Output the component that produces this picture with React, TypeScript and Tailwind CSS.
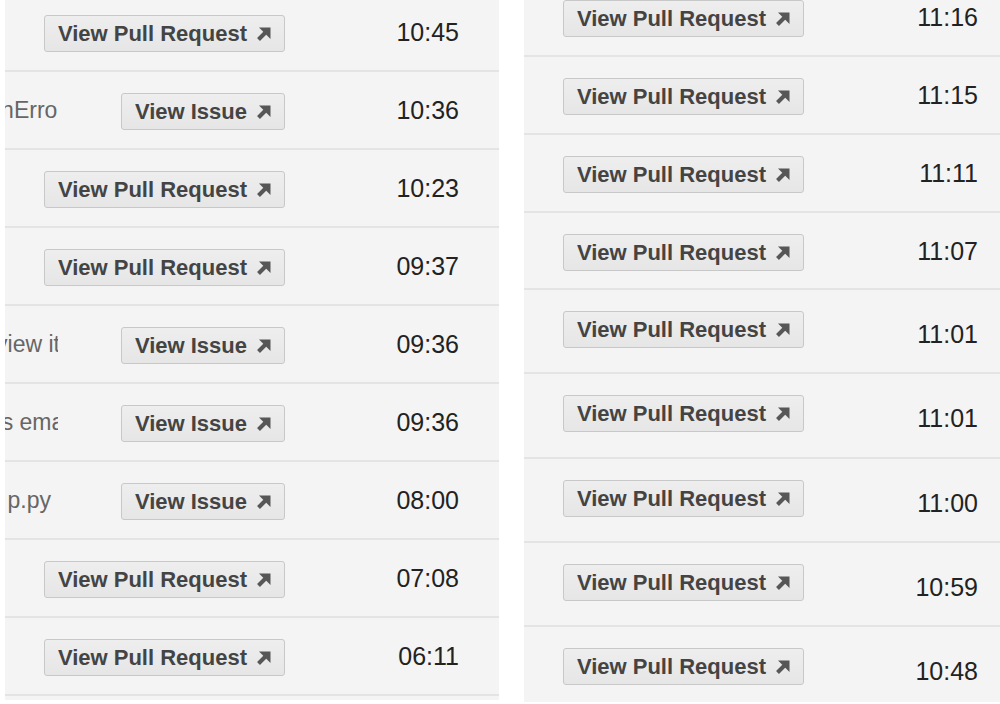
import React from "react";

type Row = {
  kind: "pr" | "issue";
  time: string;
  title?: string;
  cut?: string;
  h?: string;
  tall?: boolean;
};

const leftRows: Row[] = [
  { kind: "pr", time: "10:45" },
  { kind: "issue", time: "10:36", title: "raises ValidationError", cut: "-mr-[7px]" },
  { kind: "pr", time: "10:23" },
  { kind: "pr", time: "09:37" },
  { kind: "issue", time: "09:36", title: "couldn't review it", cut: "-mr-[2px]" },
  { kind: "issue", time: "09:36", title: "rejects emails", cut: "-mr-[28px]" },
  { kind: "issue", time: "08:00", title: "error in p.py", cut: "mr-[7px]" },
  { kind: "pr", time: "07:08" },
  { kind: "pr", time: "06:11" },
  { kind: "pr", time: "05:54" },
];

const rightRows: Row[] = [
  { kind: "pr", time: "11:16" },
  { kind: "pr", time: "11:15" },
  { kind: "pr", time: "11:11" },
  { kind: "pr", time: "11:07", h: "h-[77px]" },
  { kind: "pr", time: "11:01", h: "h-[84px]", tall: true },
  { kind: "pr", time: "11:01", h: "h-[85px]", tall: true },
  { kind: "pr", time: "11:00", h: "h-[84px]", tall: true },
  { kind: "pr", time: "10:59", h: "h-[84px]", tall: true },
  { kind: "pr", time: "10:48", h: "h-[84px]", tall: true },
];

// the little north-east arrow after each button label
const OutArrow = () => (
  <svg width="14" height="14" viewBox="0 0 14 14" className="ml-[10px] shrink-0">
    <polygon points="2,0.5 13.5,0.5 13.5,12" fill="#575757" />
    <line x1="10" y1="4" x2="1.5" y2="12.5" stroke="#575757" strokeWidth="4" />
  </svg>
);

const LinkButton = ({ label }: { label: string }) => (
  <a className="flex h-[37px] shrink-0 cursor-pointer items-center whitespace-nowrap rounded-[3px] border border-[#c8c8c8] bg-linear-to-b from-[#eeeeee] to-[#e6e6e6] pl-[13px] pr-[13px] text-[22px] leading-none font-bold text-[#444]">
    {label}
    <OutArrow />
  </a>
);

const ActivityRow = ({ row }: { row: Row }) => (
  <div className={`flex ${row.h ?? "h-[78px]"} border-b-2 border-[#e4e4e4] pr-[40px]`}>
    {row.title && (
      <div className="flex w-[53px] shrink-0 justify-end self-center overflow-hidden">
        <span className={`shrink-0 whitespace-nowrap text-[23px] leading-[30px] text-[#666] ${row.cut}`}>
          {row.title}
        </span>
      </div>
    )}
    <div className="ml-auto shrink-0 pt-[21px]">
      <LinkButton label={row.kind === "pr" ? "View Pull Request" : "View Issue"} />
    </div>
    <div
      className={`w-[174px] shrink-0 self-center text-right text-[25px] leading-[30px] text-[#222] ${
        row.tall ? "mt-[5px]" : ""
      }`}
    >
      {row.time}
    </div>
  </div>
);

export default function App() {
  return (
    <div
      className="flex h-[704px] w-[1000px] gap-[25px] overflow-hidden bg-white pl-[5px]"
      style={{ fontFamily: '"Liberation Sans", Arial, Helvetica, sans-serif' }}
    >
      <div className="h-[700px] w-[494px] shrink-0 overflow-hidden bg-[#f4f4f4]">
        <div className="-mt-[6px]">
          {leftRows.map((r, i) => (
            <ActivityRow key={i} row={r} />
          ))}
        </div>
      </div>
      <div className="h-[702px] w-[494px] shrink-0 overflow-hidden bg-[#f4f4f4]">
        <div className="-mt-[21px]">
          {rightRows.map((r, i) => (
            <ActivityRow key={i} row={r} />
          ))}
        </div>
      </div>
    </div>
  );
}
